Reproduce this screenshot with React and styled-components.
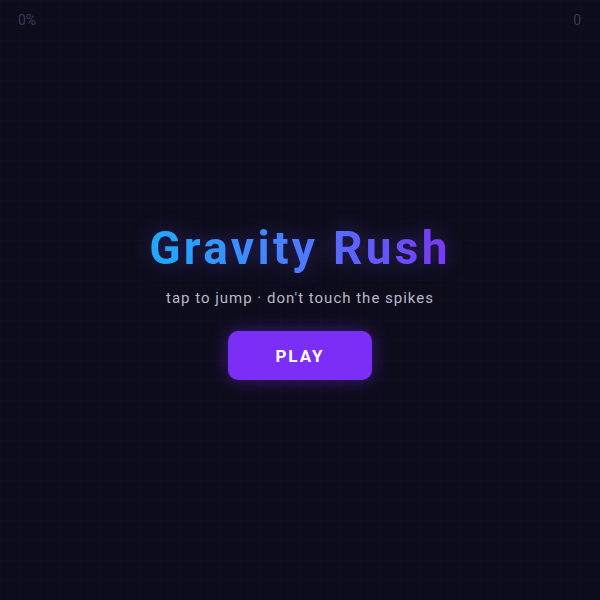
import React from "react";
import styled, { createGlobalStyle } from "styled-components";

const Global = createGlobalStyle`
  html, body { margin: 0; padding: 0; background: #0d0c1b; }
  body { font-family: Roboto, "Liberation Sans", sans-serif; }
`;

const Stage = styled.div`
  position: relative;
  width: 600px;
  height: 600px;
  background-color: #0d0c1b;
  background-image:
    linear-gradient(rgba(255,255,255,0.006) 1px, transparent 1px),
    linear-gradient(90deg, rgba(255,255,255,0.006) 1px, transparent 1px);
  background-size: 20px 20px;
  display: flex;
  flex-direction: column;
  overflow: hidden;
`;

const Hud = styled.div`
  display: flex;
  justify-content: space-between;
  padding: 12px 19px 0 18px;
  font-size: 14px;
  color: #3a3952;
  line-height: 16px;
`;

const Overlay = styled.div`
  flex: 1;
  display: flex;
  flex-direction: column;
  align-items: center;
  justify-content: center;
  padding-bottom: 28px;
`;

const Title = styled.h1`
  margin: 0;
  font-family: Roboto, "Liberation Sans", sans-serif;
  font-weight: 700;
  font-size: 46px;
  letter-spacing: 3.3px;
  line-height: 56px;
  background: linear-gradient(90deg, #1eabff 0%, #4d7bff 50%, #7b37f4 100%);
  -webkit-background-clip: text;
  background-clip: text;
  color: transparent;
  filter: drop-shadow(0 0 10px rgba(110, 80, 255, 0.35));
`;

const Subtitle = styled.p`
  margin: 12px 0 0;
  font-size: 15px;
  letter-spacing: 1px;
  color: #b9b8c8;
  line-height: 20px;
`;

const PlayButton = styled.button`
  margin-top: 23px;
  width: 144px;
  height: 49px;
  border: none;
  border-radius: 10px;
  background: #7b2ff6;
  color: #fff;
  font-family: Roboto, "Liberation Sans", sans-serif;
  font-weight: 700;
  font-size: 17px;
  letter-spacing: 2px;
  box-shadow: 0 0 18px rgba(123, 47, 246, 0.45);
  cursor: pointer;
`;

export default function App() {
  return (
    <>
      <Global />
      <Stage>
        <Hud>
          <span>0%</span>
          <span>0</span>
        </Hud>
        <Overlay>
          <Title>Gravity Rush</Title>
          <Subtitle>tap to jump · don't touch the spikes</Subtitle>
          <PlayButton>PLAY</PlayButton>
        </Overlay>
      </Stage>
    </>
  );
}
